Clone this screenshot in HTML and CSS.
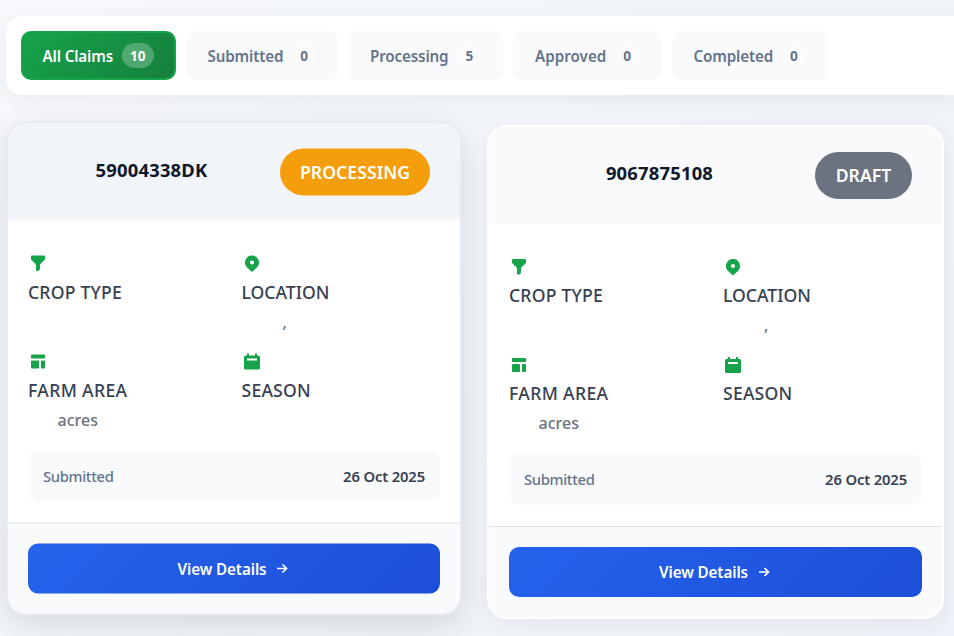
FILE: index.html
```html
<!DOCTYPE html>
<html lang="en">
<head>
<meta charset="utf-8">
<title>Claims</title>
<link rel="stylesheet" href="styles.css">
</head>
<body>
<svg class="sprite" aria-hidden="true">
  <symbol id="crop" viewBox="0 0 18 18"><path d="M2.800 1h12.400q.8 0 .8.8v2.400q0 .7-.5 1.200l-3.900 3.900q-.6.6-.6 1.400v3.500q0 .7-.6 1.200l-1.300 1.200Q7.300 17 7 15.600v-4.900q0-.8-.6-1.400L2.500 5.400Q2 4.900 2 4.200V1.800Q2 1 2.800 1z"/></symbol>
  <symbol id="pin" viewBox="0 0 18 18"><path fill-rule="evenodd" d="M9 1a7 7 0 0 1 5 11.900L9 17.600 4 12.900A7 7 0 0 1 9 1zm0 4.900a2.100 2.100 0 1 0 0 4.200 2.100 2.100 0 0 0 0-4.200z"/></symbol>
  <symbol id="area" viewBox="0 0 18 18"><rect x="2" y="2" width="14" height="4" rx=".8"/><rect x="2" y="8" width="8" height="8" rx=".8"/><rect x="12" y="8" width="4" height="8" rx=".8"/></symbol>
  <symbol id="calendar" viewBox="0 0 18 18"><path fill-rule="evenodd" d="M4 1h2v2h6V1h2v2h1.500A1.500 1.500 0 0 1 17 4.500v11a1.500 1.500 0 0 1-1.500 1.500h-13A1.500 1.500 0 0 1 1 15.500v-11A1.500 1.500 0 0 1 2.500 3H4zM4 6v2h10V6z"/></symbol>
  <symbol id="arrow" viewBox="0 0 12 12"><path d="M1 6h9.400M6.500 2l4 4-4 4" fill="none" stroke="currentColor" stroke-width="1.700"/></symbol>
</svg>
<nav class="tabs">
  <button class="tab active"><span>All Claims</span><b>10</b></button>
  <button class="tab submitted"><span>Submitted</span><b>0</b></button>
  <button class="tab processing"><span>Processing</span><b>5</b></button>
  <button class="tab approved"><span>Approved</span><b>0</b></button>
  <button class="tab completed"><span>Completed</span><b>0</b></button>
</nav>
<main class="claims">
  <article class="card raised">
    <header class="head"><h3>59004338DK</h3><span class="status amber">PROCESSING</span></header>
    <div class="body">
      <div class="details">
        <div class="item"><svg class="icon"><use href="#crop"/></svg><div class="label crop">CROP TYPE</div><div class="value"></div></div>
        <div class="item"><svg class="icon"><use href="#pin"/></svg><div class="label">LOCATION</div><div class="value comma">,</div></div>
        <div class="item"><svg class="icon"><use href="#area"/></svg><div class="label farm">FARM AREA</div><div class="value">acres</div></div>
        <div class="item"><svg class="icon"><use href="#calendar"/></svg><div class="label season">SEASON</div><div class="value"></div></div>
      </div>
      <div class="date"><span>Submitted</span><strong>26 Oct 2025</strong></div>
    </div>
    <footer class="foot"><button class="view"><span>View Details</span><svg><use href="#arrow"/></svg></button></footer>
  </article>
  <article class="card">
    <header class="head"><h3>9067875108</h3><span class="status gray">DRAFT</span></header>
    <div class="body">
      <div class="details">
        <div class="item"><svg class="icon"><use href="#crop"/></svg><div class="label crop">CROP TYPE</div><div class="value"></div></div>
        <div class="item"><svg class="icon"><use href="#pin"/></svg><div class="label">LOCATION</div><div class="value comma">,</div></div>
        <div class="item"><svg class="icon"><use href="#area"/></svg><div class="label farm">FARM AREA</div><div class="value">acres</div></div>
        <div class="item"><svg class="icon"><use href="#calendar"/></svg><div class="label season">SEASON</div><div class="value"></div></div>
      </div>
      <div class="date"><span>Submitted</span><strong>26 Oct 2025</strong></div>
    </div>
    <footer class="foot"><button class="view"><span>View Details</span><svg><use href="#arrow"/></svg></button></footer>
  </article>
</main>
</body>
</html>
```
FILE: styles.css
```css
* { box-sizing: border-box; }
html { overflow: hidden; }
body {
  margin: 0;
  padding: 16px 0 0 6px;
  height: 636px;
  overflow: hidden;
  background: linear-gradient(135deg, #f7f9fc 0%, #f1f5f9 50%, #eef2f8 100%);
  font-family: "Noto Sans", "Open Sans", sans-serif;
  color: #374151;
}
button { font: inherit; margin: 0; }
.sprite { display: none; }
.tabs {
  display: flex;
  gap: 10px;
  height: 79px;
  padding: 15px;
  border-radius: 16px 0 0 16px;
  background: #fff;
  box-shadow: 0 4px 20px rgba(0, 0, 0, .06);
}
.tab {
  display: flex;
  align-items: center;
  gap: 9px;
  height: 49px;
  padding: 0 0 0 19.500px;
  border: 2px solid transparent;
  border-radius: 10px;
  background: #f8fafc;
  color: #64748b;
  font-size: 15.200px;
  font-weight: 600;
  letter-spacing: -.15px;
  white-space: nowrap;
}
.tab b {
  padding: 0 8px;
  height: 25px;
  line-height: 25px;
  border-radius: 13px;
  background: rgba(255, 255, 255, .3);
  font-size: 13.600px;
  font-weight: 700;
  letter-spacing: 0;
}
.tab.active {
  width: 155px;
  border-color: #16a34a;
  background: linear-gradient(135deg, #16a34a, #15803d);
  color: #fff;
}
.tab.active b { background: rgba(255, 255, 255, .25); }
.submitted { width: 152px; }
.processing { width: 155px; padding-left: 20px; }
.approved { width: 149px; padding-left: 20px; letter-spacing: 0; }
.completed { width: 156px; }

.claims {
  display: grid;
  grid-template-columns: 456px 457px;
  gap: 25px;
  margin-top: 30px;
}
.card {
  height: 494px;
  border: 2px solid #fff;
  border-radius: 20px;
  overflow: hidden;
  background: #fff;
  box-shadow: 0 4px 20px rgba(0, 0, 0, .06);
}
.raised {
  transform: translateY(-3.500px);
  border-color: #e6ebf3;
  box-shadow: 0 8px 30px rgba(0, 0, 0, .12);
}
.head {
  display: flex;
  gap: 15px;
  height: 97px;
  padding: 25px 30px;
  background: #f8fafc;
}
.raised .head { background: #f1f5f9; }
h3 {
  flex: 1;
  margin: 0;
  text-align: center;
  font-size: 18.400px;
  line-height: 41px;
  font-weight: 700;
  letter-spacing: .2px;
  color: #0f172a;
}
.status {
  height: 47px;
  line-height: 47px;
  border-radius: 24px;
  text-align: center;
  font-size: 17.600px;
  font-weight: 600;
  letter-spacing: .05px;
  color: #fff;
}
.amber { width: 150px; background: #f59e0b; }
.gray { width: 97px; background: #6b7280; }
.body { height: 302px; padding: 30px 20px 20px; }
.details {
  display: grid;
  grid-template-columns: 1fr 1fr;
  gap: 15px;
}
.item { height: 83px; }
.icon {
  display: block;
  width: 18px;
  height: 18px;
  margin: 4px 1px;
  fill: #16a34a;
}
.label {
  height: 32px;
  line-height: 30px;
  font-size: 17.600px;
  font-weight: 550;
  color: #374151;
  white-space: nowrap;
  letter-spacing: 0;
}
.crop { letter-spacing: .2px; }
.farm { letter-spacing: .35px; }
.season { letter-spacing: .2px; }
.value {
  height: 25px;
  line-height: 26px;
  margin-left: 29.500px;
  font-size: 16px;
  font-weight: 550;
  color: #6b7280;
}
.value.comma { margin-left: 41px; }
.date {
  display: flex;
  justify-content: space-between;
  align-items: center;
  height: 52px;
  margin-top: 17.500px;
  padding: 0 15px;
  border-radius: 12px;
  background: #f8fafc;
  font-size: 14.800px;
}
.date span { color: #64748b; font-weight: 550; letter-spacing: -.35px; }
.date strong { font-weight: 600; color: #374151; letter-spacing: -.15px; }
.foot {
  height: 91px;
  padding: 20px;
  border-top: 1px solid #dbe4ef;
  background: #f8fafc;
}
.view {
  display: flex;
  align-items: center;
  justify-content: center;
  gap: 10px;
  width: 100%;
  height: 50px;
  padding: 0 2px 0 0;
  border: 0;
  border-radius: 10px;
  background: linear-gradient(135deg, #2563eb, #1d4ed8);
  color: #fff;
  font-size: 15.200px;
  font-weight: 600;
  letter-spacing: -.1px;
}
.view svg { width: 12px; height: 12px; }
```
